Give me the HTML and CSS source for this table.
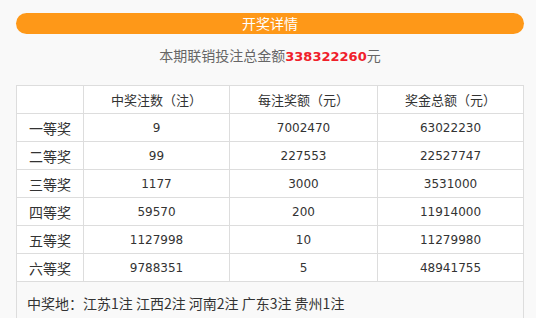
FILE: index.html
```html
<!DOCTYPE html>
<html lang="zh-CN">
<head>
<meta charset="utf-8">
<link rel="stylesheet" href="styles.css">
</head>
<body>
<div class="wrap">
  <div class="bar">开奖详情</div>
  <p class="summary">本期联销投注总金额<span class="amount">338322260</span>元</p>
  <table class="prize">
    <thead>
      <tr><th class="c1"></th><th class="c2">中奖注数（注）</th><th class="c3">每注奖额（元）</th><th>奖金总额（元）</th></tr>
    </thead>
    <tbody>
      <tr><td>一等奖</td><td>9</td><td>7002470</td><td>63022230</td></tr>
      <tr><td>二等奖</td><td>99</td><td>227553</td><td>22527747</td></tr>
      <tr><td>三等奖</td><td>1177</td><td>3000</td><td>3531000</td></tr>
      <tr><td>四等奖</td><td>59570</td><td>200</td><td>11914000</td></tr>
      <tr><td>五等奖</td><td>1127998</td><td>10</td><td>11279980</td></tr>
      <tr><td>六等奖</td><td>9788351</td><td>5</td><td>48941755</td></tr>
      <tr class="foot"><td colspan="4">中奖地：江苏1注 江西2注 河南2注 广东3注 贵州1注</td></tr>
    </tbody>
  </table>
</div>
</body>
</html>
```
FILE: styles.css
```css
html, body {
  margin: 0;
  padding: 0;
  background: #f9f9f9;
}
.wrap {
  margin-left: 16px;
  width: 508px;
  padding-top: 13px;
  font-family: "Noto Sans CJK SC", "DejaVu Sans", sans-serif;
  color: #333;
}
.bar {
  height: 21px;
  line-height: 21px;
  border-radius: 11px;
  background: #fe9818;
  color: #fff;
  text-align: center;
  font-size: 14px;
}
.summary {
  margin: 10px 0 0;
  height: 22px;
  line-height: 22px;
  text-align: center;
  font-size: 14px;
  color: #666;
}
.amount {
  font-family: "DejaVu Sans", sans-serif;
  font-size: 13px;
  font-weight: bold;
  color: #f0202a;
}
.prize {
  margin-top: 19px;
  width: 508px;
  border-collapse: collapse;
  background: #fff;
  table-layout: fixed;
}
.prize th, .prize td {
  border: 1px solid #ddd;
  height: 27px;
  padding: 0;
  text-align: center;
  font-size: 12px;
  font-weight: normal;
  color: #333;
}
.prize th {
  font-size: 13px;
}
.prize td {
  font-family: "DejaVu Sans", "Noto Sans CJK SC", sans-serif;
}
.prize td:first-child {
  font-family: "Noto Sans CJK SC", sans-serif;
  font-size: 14px;
}
.c1 { width: 66px; }
.c2 { width: 145px; }
.c3 { width: 147px; }
.prize tr.foot td {
  height: 42px;
  text-align: left;
  padding-left: 10px;
  font-size: 14px;
  background: #f9f9f9;
  font-family: "Noto Sans CJK SC", sans-serif;
}
```
